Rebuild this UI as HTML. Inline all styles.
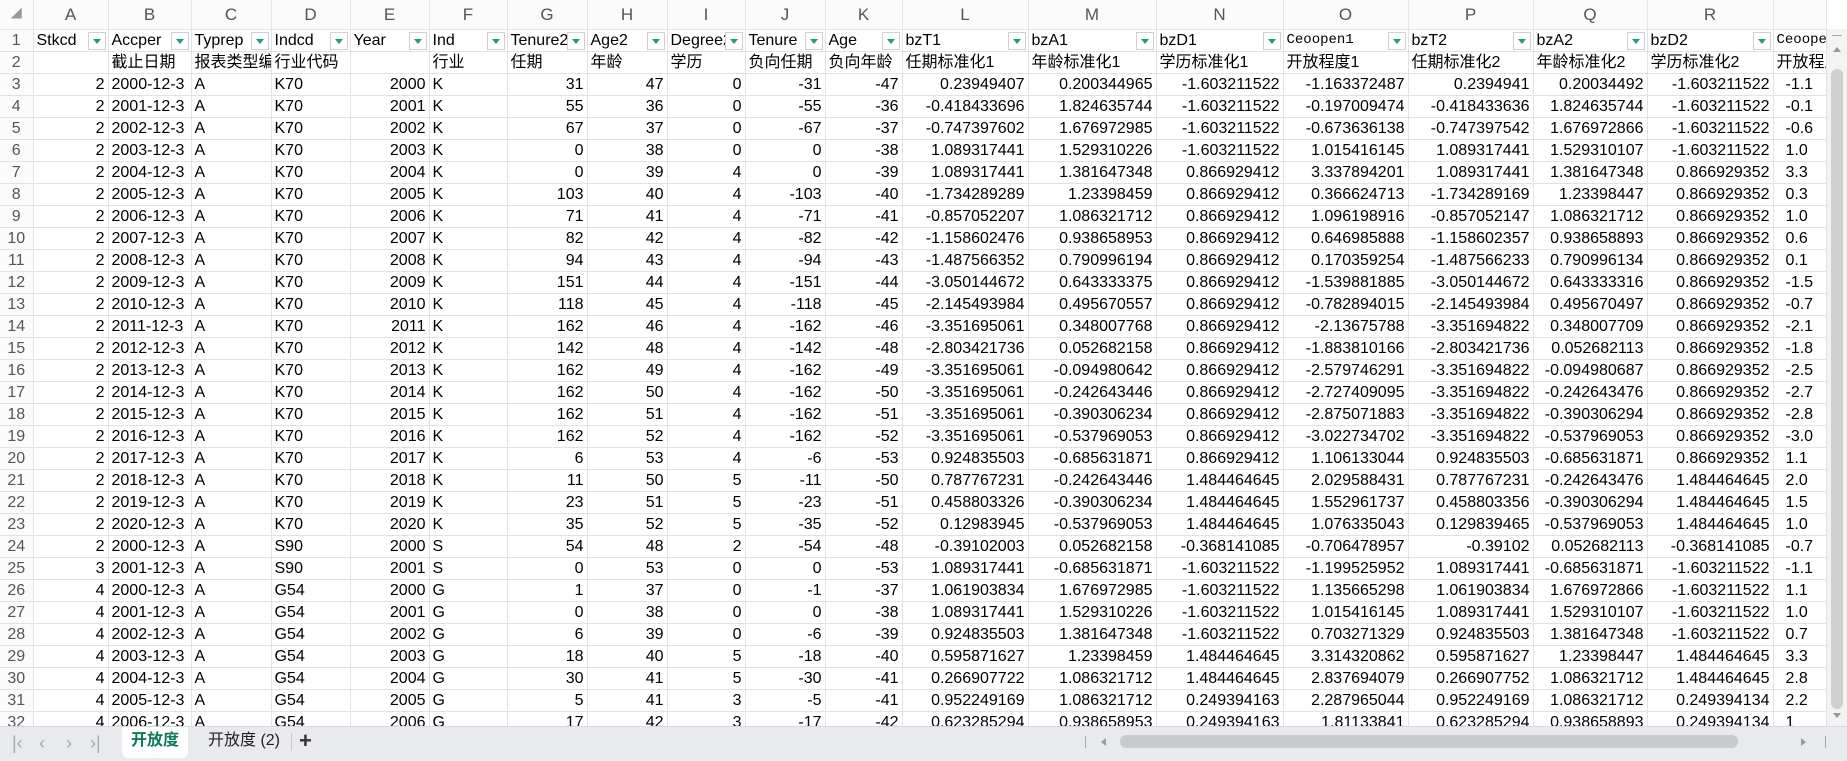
<!DOCTYPE html>
<html><head><meta charset="utf-8"><style>
*{margin:0;padding:0;box-sizing:border-box}
body{width:1847px;height:761px;overflow:hidden;background:#fff;font-family:"Liberation Sans","Noto Sans CJK SC",sans-serif;font-size:16px;color:#000;position:relative}
table{position:absolute;left:0;top:0;border-collapse:collapse;table-layout:fixed;width:1826px}
td,th{height:22px;line-height:21px;white-space:nowrap;overflow:hidden;border-right:1px solid #e2e2e2;border-bottom:1px solid #e2e2e2;padding:0 3px;text-align:right;font-weight:normal}
tr.h td{height:29px;text-align:center;color:#555;font-size:17px;background:#fbfbfb;border-color:#e6e6e6}
th{text-align:center;color:#555;background:#fbfbfb;padding:0}
td.l{text-align:left}
td.s{text-align:left;padding-left:12px}
tr.r1 td{text-align:left;position:relative}
tr.r2 td{text-align:left}
.f{position:absolute;right:2px;top:2px;width:18px;height:18px;background:#fff;border:1px solid #d0d0d0}
.f:after{content:"";position:absolute;left:4px;top:6px;border-left:4px solid transparent;border-right:4px solid transparent;border-top:5px solid #1fa06c}
.m{font-family:"Liberation Mono","Noto Sans CJK SC",monospace;font-size:14px}
.tabs{position:absolute;left:0;top:726px;width:1847px;height:35px;background:#e9eaee;border-top:1px solid #d9d9d9}
.vs{position:absolute;left:1826px;top:29px;width:21px;height:697px;background:#f3f3f3;border-left:1px solid #e2e2e2}
</style></head><body>
<table>
<colgroup><col style="width:33px"><col style="width:75px"><col style="width:83px"><col style="width:80px"><col style="width:79px"><col style="width:79px"><col style="width:78px"><col style="width:80px"><col style="width:80px"><col style="width:78px"><col style="width:80px"><col style="width:77px"><col style="width:126px"><col style="width:128px"><col style="width:127px"><col style="width:125px"><col style="width:125px"><col style="width:114px"><col style="width:126px"><col style="width:53px"></colgroup>
<tr class="h"><td style="font-size:11px;color:#999">◢</td><td>A</td><td>B</td><td>C</td><td>D</td><td>E</td><td>F</td><td>G</td><td>H</td><td>I</td><td>J</td><td>K</td><td>L</td><td>M</td><td>N</td><td>O</td><td>P</td><td>Q</td><td>R</td><td></td></tr>
<tr class="r1"><th>1</th><td>Stkcd<span class="f"></span></td><td>Accper<span class="f"></span></td><td>Typrep<span class="f"></span></td><td>Indcd<span class="f"></span></td><td>Year<span class="f"></span></td><td>Ind<span class="f"></span></td><td>Tenure2<span class="f"></span></td><td>Age2<span class="f"></span></td><td>Degree2<span class="f"></span></td><td>Tenure<span class="f"></span></td><td>Age<span class="f"></span></td><td>bzT1<span class="f"></span></td><td>bzA1<span class="f"></span></td><td>bzD1<span class="f"></span></td><td class="m">Ceoopen1<span class="f"></span></td><td>bzT2<span class="f"></span></td><td>bzA2<span class="f"></span></td><td>bzD2<span class="f"></span></td><td class="m">Ceoopen2</td></tr>
<tr class="r2"><th>2</th><td></td><td>截止日期</td><td>报表类型编码</td><td>行业代码</td><td></td><td>行业</td><td>任期</td><td>年龄</td><td>学历</td><td>负向任期</td><td>负向年龄</td><td>任期标准化1</td><td>年龄标准化1</td><td>学历标准化1</td><td>开放程度1</td><td>任期标准化2</td><td>年龄标准化2</td><td>学历标准化2</td><td>开放程度2</td></tr>
<tr><th>3</th><td>2<td class=l>2000-12-3<td class=l>A<td class=l>K70<td>2000<td class=l>K<td>31<td>47<td>0<td>-31<td>-47<td>0.23949407<td>0.200344965<td>-1.603211522<td>-1.163372487<td>0.2394941<td>0.20034492<td>-1.603211522<td class=s>-1.1</tr>
<tr><th>4</th><td>2<td class=l>2001-12-3<td class=l>A<td class=l>K70<td>2001<td class=l>K<td>55<td>36<td>0<td>-55<td>-36<td>-0.418433696<td>1.824635744<td>-1.603211522<td>-0.197009474<td>-0.418433636<td>1.824635744<td>-1.603211522<td class=s>-0.1</tr>
<tr><th>5</th><td>2<td class=l>2002-12-3<td class=l>A<td class=l>K70<td>2002<td class=l>K<td>67<td>37<td>0<td>-67<td>-37<td>-0.747397602<td>1.676972985<td>-1.603211522<td>-0.673636138<td>-0.747397542<td>1.676972866<td>-1.603211522<td class=s>-0.6</tr>
<tr><th>6</th><td>2<td class=l>2003-12-3<td class=l>A<td class=l>K70<td>2003<td class=l>K<td>0<td>38<td>0<td>0<td>-38<td>1.089317441<td>1.529310226<td>-1.603211522<td>1.015416145<td>1.089317441<td>1.529310107<td>-1.603211522<td class=s>1.0</tr>
<tr><th>7</th><td>2<td class=l>2004-12-3<td class=l>A<td class=l>K70<td>2004<td class=l>K<td>0<td>39<td>4<td>0<td>-39<td>1.089317441<td>1.381647348<td>0.866929412<td>3.337894201<td>1.089317441<td>1.381647348<td>0.866929352<td class=s>3.3</tr>
<tr><th>8</th><td>2<td class=l>2005-12-3<td class=l>A<td class=l>K70<td>2005<td class=l>K<td>103<td>40<td>4<td>-103<td>-40<td>-1.734289289<td>1.23398459<td>0.866929412<td>0.366624713<td>-1.734289169<td>1.23398447<td>0.866929352<td class=s>0.3</tr>
<tr><th>9</th><td>2<td class=l>2006-12-3<td class=l>A<td class=l>K70<td>2006<td class=l>K<td>71<td>41<td>4<td>-71<td>-41<td>-0.857052207<td>1.086321712<td>0.866929412<td>1.096198916<td>-0.857052147<td>1.086321712<td>0.866929352<td class=s>1.0</tr>
<tr><th>10</th><td>2<td class=l>2007-12-3<td class=l>A<td class=l>K70<td>2007<td class=l>K<td>82<td>42<td>4<td>-82<td>-42<td>-1.158602476<td>0.938658953<td>0.866929412<td>0.646985888<td>-1.158602357<td>0.938658893<td>0.866929352<td class=s>0.6</tr>
<tr><th>11</th><td>2<td class=l>2008-12-3<td class=l>A<td class=l>K70<td>2008<td class=l>K<td>94<td>43<td>4<td>-94<td>-43<td>-1.487566352<td>0.790996194<td>0.866929412<td>0.170359254<td>-1.487566233<td>0.790996134<td>0.866929352<td class=s>0.1</tr>
<tr><th>12</th><td>2<td class=l>2009-12-3<td class=l>A<td class=l>K70<td>2009<td class=l>K<td>151<td>44<td>4<td>-151<td>-44<td>-3.050144672<td>0.643333375<td>0.866929412<td>-1.539881885<td>-3.050144672<td>0.643333316<td>0.866929352<td class=s>-1.5</tr>
<tr><th>13</th><td>2<td class=l>2010-12-3<td class=l>A<td class=l>K70<td>2010<td class=l>K<td>118<td>45<td>4<td>-118<td>-45<td>-2.145493984<td>0.495670557<td>0.866929412<td>-0.782894015<td>-2.145493984<td>0.495670497<td>0.866929352<td class=s>-0.7</tr>
<tr><th>14</th><td>2<td class=l>2011-12-3<td class=l>A<td class=l>K70<td>2011<td class=l>K<td>162<td>46<td>4<td>-162<td>-46<td>-3.351695061<td>0.348007768<td>0.866929412<td>-2.13675788<td>-3.351694822<td>0.348007709<td>0.866929352<td class=s>-2.1</tr>
<tr><th>15</th><td>2<td class=l>2012-12-3<td class=l>A<td class=l>K70<td>2012<td class=l>K<td>142<td>48<td>4<td>-142<td>-48<td>-2.803421736<td>0.052682158<td>0.866929412<td>-1.883810166<td>-2.803421736<td>0.052682113<td>0.866929352<td class=s>-1.8</tr>
<tr><th>16</th><td>2<td class=l>2013-12-3<td class=l>A<td class=l>K70<td>2013<td class=l>K<td>162<td>49<td>4<td>-162<td>-49<td>-3.351695061<td>-0.094980642<td>0.866929412<td>-2.579746291<td>-3.351694822<td>-0.094980687<td>0.866929352<td class=s>-2.5</tr>
<tr><th>17</th><td>2<td class=l>2014-12-3<td class=l>A<td class=l>K70<td>2014<td class=l>K<td>162<td>50<td>4<td>-162<td>-50<td>-3.351695061<td>-0.242643446<td>0.866929412<td>-2.727409095<td>-3.351694822<td>-0.242643476<td>0.866929352<td class=s>-2.7</tr>
<tr><th>18</th><td>2<td class=l>2015-12-3<td class=l>A<td class=l>K70<td>2015<td class=l>K<td>162<td>51<td>4<td>-162<td>-51<td>-3.351695061<td>-0.390306234<td>0.866929412<td>-2.875071883<td>-3.351694822<td>-0.390306294<td>0.866929352<td class=s>-2.8</tr>
<tr><th>19</th><td>2<td class=l>2016-12-3<td class=l>A<td class=l>K70<td>2016<td class=l>K<td>162<td>52<td>4<td>-162<td>-52<td>-3.351695061<td>-0.537969053<td>0.866929412<td>-3.022734702<td>-3.351694822<td>-0.537969053<td>0.866929352<td class=s>-3.0</tr>
<tr><th>20</th><td>2<td class=l>2017-12-3<td class=l>A<td class=l>K70<td>2017<td class=l>K<td>6<td>53<td>4<td>-6<td>-53<td>0.924835503<td>-0.685631871<td>0.866929412<td>1.106133044<td>0.924835503<td>-0.685631871<td>0.866929352<td class=s>1.1</tr>
<tr><th>21</th><td>2<td class=l>2018-12-3<td class=l>A<td class=l>K70<td>2018<td class=l>K<td>11<td>50<td>5<td>-11<td>-50<td>0.787767231<td>-0.242643446<td>1.484464645<td>2.029588431<td>0.787767231<td>-0.242643476<td>1.484464645<td class=s>2.0</tr>
<tr><th>22</th><td>2<td class=l>2019-12-3<td class=l>A<td class=l>K70<td>2019<td class=l>K<td>23<td>51<td>5<td>-23<td>-51<td>0.458803326<td>-0.390306234<td>1.484464645<td>1.552961737<td>0.458803356<td>-0.390306294<td>1.484464645<td class=s>1.5</tr>
<tr><th>23</th><td>2<td class=l>2020-12-3<td class=l>A<td class=l>K70<td>2020<td class=l>K<td>35<td>52<td>5<td>-35<td>-52<td>0.12983945<td>-0.537969053<td>1.484464645<td>1.076335043<td>0.129839465<td>-0.537969053<td>1.484464645<td class=s>1.0</tr>
<tr><th>24</th><td>2<td class=l>2000-12-3<td class=l>A<td class=l>S90<td>2000<td class=l>S<td>54<td>48<td>2<td>-54<td>-48<td>-0.39102003<td>0.052682158<td>-0.368141085<td>-0.706478957<td>-0.39102<td>0.052682113<td>-0.368141085<td class=s>-0.7</tr>
<tr><th>25</th><td>3<td class=l>2001-12-3<td class=l>A<td class=l>S90<td>2001<td class=l>S<td>0<td>53<td>0<td>0<td>-53<td>1.089317441<td>-0.685631871<td>-1.603211522<td>-1.199525952<td>1.089317441<td>-0.685631871<td>-1.603211522<td class=s>-1.1</tr>
<tr><th>26</th><td>4<td class=l>2000-12-3<td class=l>A<td class=l>G54<td>2000<td class=l>G<td>1<td>37<td>0<td>-1<td>-37<td>1.061903834<td>1.676972985<td>-1.603211522<td>1.135665298<td>1.061903834<td>1.676972866<td>-1.603211522<td class=s>1.1</tr>
<tr><th>27</th><td>4<td class=l>2001-12-3<td class=l>A<td class=l>G54<td>2001<td class=l>G<td>0<td>38<td>0<td>0<td>-38<td>1.089317441<td>1.529310226<td>-1.603211522<td>1.015416145<td>1.089317441<td>1.529310107<td>-1.603211522<td class=s>1.0</tr>
<tr><th>28</th><td>4<td class=l>2002-12-3<td class=l>A<td class=l>G54<td>2002<td class=l>G<td>6<td>39<td>0<td>-6<td>-39<td>0.924835503<td>1.381647348<td>-1.603211522<td>0.703271329<td>0.924835503<td>1.381647348<td>-1.603211522<td class=s>0.7</tr>
<tr><th>29</th><td>4<td class=l>2003-12-3<td class=l>A<td class=l>G54<td>2003<td class=l>G<td>18<td>40<td>5<td>-18<td>-40<td>0.595871627<td>1.23398459<td>1.484464645<td>3.314320862<td>0.595871627<td>1.23398447<td>1.484464645<td class=s>3.3</tr>
<tr><th>30</th><td>4<td class=l>2004-12-3<td class=l>A<td class=l>G54<td>2004<td class=l>G<td>30<td>41<td>5<td>-30<td>-41<td>0.266907722<td>1.086321712<td>1.484464645<td>2.837694079<td>0.266907752<td>1.086321712<td>1.484464645<td class=s>2.8</tr>
<tr><th>31</th><td>4<td class=l>2005-12-3<td class=l>A<td class=l>G54<td>2005<td class=l>G<td>5<td>41<td>3<td>-5<td>-41<td>0.952249169<td>1.086321712<td>0.249394163<td>2.287965044<td>0.952249169<td>1.086321712<td>0.249394134<td class=s>2.2</tr>
<tr><th>32</th><td>4<td class=l>2006-12-3<td class=l>A<td class=l>G54<td>2006<td class=l>G<td>17<td>42<td>3<td>-17<td>-42<td>0.623285294<td>0.938658953<td>0.249394163<td>1.81133841<td>0.623285294<td>0.938658893<td>0.249394134<td class=s>1</tr>
</table>
<div class="vs">
<div style="position:absolute;left:5px;top:6px;width:10px;height:1px;background:#aaa"></div>
<div style="position:absolute;left:6px;top:18px;border-left:4px solid transparent;border-right:4px solid transparent;border-bottom:5px solid #999"></div>
<div style="position:absolute;left:4px;top:40px;width:12px;height:640px;background:#cfcfcf;border-radius:6px"></div>
<div style="position:absolute;left:6px;top:684px;border-left:4px solid transparent;border-right:4px solid transparent;border-top:5px solid #999"></div>
</div>
<div class="tabs">
<div style="position:absolute;left:12px;top:6px;font-size:18px;color:#a5a8ad">|‹</div>
<div style="position:absolute;left:39px;top:6px;font-size:18px;color:#a5a8ad">‹</div>
<div style="position:absolute;left:66px;top:6px;font-size:18px;color:#a5a8ad">›</div>
<div style="position:absolute;left:90px;top:6px;font-size:18px;color:#a5a8ad">›|</div>
<div style="position:absolute;left:122px;top:0;width:66px;height:31px;background:#fff;border-radius:0 0 6px 6px;color:#0e7a5a;font-weight:bold;text-align:center;line-height:28px;font-size:16px">开放度</div>
<div style="position:absolute;left:208px;top:0;height:31px;line-height:28px;font-size:16px;color:#222">开放度 (2)</div>
<div style="position:absolute;left:291px;top:6px;width:1px;height:18px;background:#c8c8c8"></div>
<div style="position:absolute;left:299px;top:0;line-height:28px;font-size:22px;font-weight:bold;color:#333">+</div>
<div style="position:absolute;left:1085px;top:9px;width:1px;height:12px;background:#aaa"></div>
<div style="position:absolute;left:1101px;top:11px;border-top:4px solid transparent;border-bottom:4px solid transparent;border-right:5px solid #999"></div>
<div style="position:absolute;left:1120px;top:8px;width:618px;height:13px;background:#c9cacd;border-radius:7px"></div>
<div style="position:absolute;left:1801px;top:11px;border-top:4px solid transparent;border-bottom:4px solid transparent;border-left:5px solid #999"></div>
<div style="position:absolute;left:1825px;top:9px;width:1px;height:12px;background:#aaa"></div>
</div>
</body></html>
